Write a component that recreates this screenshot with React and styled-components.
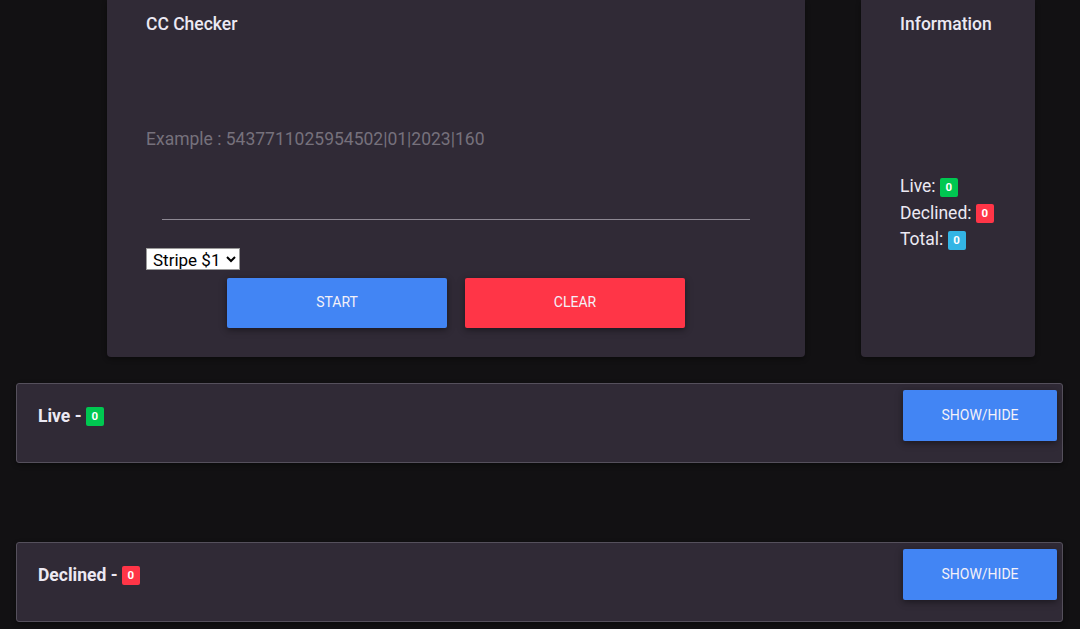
import React from 'react';
import styled, { createGlobalStyle } from 'styled-components';

const GlobalStyle = createGlobalStyle`
  html, body {
    margin: 0;
    padding: 0;
    background: #121113;
    font-family: Roboto, "Noto Sans", Arial, sans-serif;
  }
`;

const colors = {
  success: '#00c851',
  danger: '#ff3547',
  info: '#33b5e5',
};

function App() {
  return (
    <>
      <GlobalStyle />
      <PageStyled>
        <TopRowStyled>
          <CheckerCardStyled>
            <CardTitle>CC Checker</CardTitle>
            <FieldStyled>
              <FloatLabel>Example : 5437711025954502|01|2023|160</FloatLabel>
              <TextArea />
            </FieldStyled>
            <GateSelect defaultValue="stripe1">
              <option value="stripe1">Stripe $1</option>
            </GateSelect>
            <ButtonRow>
              <ActionButton color="#4285f4">Start</ActionButton>
              <ActionButton color={colors.danger}>Clear</ActionButton>
            </ButtonRow>
          </CheckerCardStyled>

          <InfoCardStyled>
            <CardTitle>Information</CardTitle>
            <StatList>
              <StatLine>Live: <Badge color={colors.success}>0</Badge></StatLine>
              <StatLine>Declined: <Badge color={colors.danger}>0</Badge></StatLine>
              <StatLine>Total: <Badge color={colors.info}>0</Badge></StatLine>
            </StatList>
          </InfoCardStyled>
        </TopRowStyled>

        <ResultPanel>
          <PanelHeader>
            <PanelTitle>Live - <Badge color={colors.success}>0</Badge></PanelTitle>
            <ActionButton color="#4285f4" small>Show/Hide</ActionButton>
          </PanelHeader>
        </ResultPanel>

        <ResultPanel spaced>
          <PanelHeader>
            <PanelTitle>Declined - <Badge color={colors.danger}>0</Badge></PanelTitle>
            <ActionButton color="#4285f4" small>Show/Hide</ActionButton>
          </PanelHeader>
        </ResultPanel>
      </PageStyled>
    </>
  );
}

export default App;

const PageStyled = styled.div`
  width: 1080px;
  padding-bottom: 20px;
`;

const TopRowStyled = styled.div`
  display: flex;
  gap: 56px;
  padding-left: 107px;
`;

const Card = styled.div`
  background: #302a36;
  border-radius: 0 0 4px 4px;
  box-shadow: 0 2px 5px rgba(0, 0, 0, 0.4);
  box-sizing: border-box;
  height: 357px;
  padding: 13px 39px 0;
  color: #ece9f3;
`;

const CheckerCardStyled = styled(Card)`
  width: 698px;
`;

const InfoCardStyled = styled(Card)`
  width: 174px;
`;

const CardTitle = styled.div`
  font-size: 17.5px;
  font-weight: 500;
  line-height: 22px;
  color: #ece9f3;
`;

const FieldStyled = styled.div`
  position: relative;
  margin: 93px 0 0 16px;
  width: 588px;
`;

const FloatLabel = styled.label`
  position: absolute;
  left: -16px;
  top: 0;
  font-size: 17.5px;
  line-height: 22px;
  color: #76717c;
  pointer-events: none;
`;

const TextArea = styled.textarea`
  display: block;
  width: 100%;
  height: 92px;
  box-sizing: border-box;
  background: transparent;
  border: none;
  border-bottom: 1px solid #8d8893;
  resize: none;
  outline: none;
  color: #ece9f3;
  font-family: inherit;
  font-size: 17px;
`;

const GateSelect = styled.select`
  display: block;
  margin-top: 28px;
  height: 22px;
  padding: 0 2px;
  background: #fff;
  color: #000;
  border: 1px solid #9a9a9a;
  border-radius: 0;
  font-family: Roboto, Arial, sans-serif;
  font-size: 17px;
`;

const ButtonRow = styled.div`
  display: flex;
  justify-content: center;
  gap: 18px;
  margin: 8px 0 0 -39px;
  width: 698px;
`;

const ActionButton = styled.button`
  width: ${p => (p.small ? '154px' : '220px')};
  height: ${p => (p.small ? '51px' : '50px')};
  padding: 0 0 2px;
  background: ${p => p.color};
  color: #f4f1f8;
  border: none;
  border-radius: 2px;
  box-shadow: 0 2px 5px rgba(0, 0, 0, 0.25), 0 2px 10px rgba(0, 0, 0, 0.2);
  font-family: Roboto, Arial, sans-serif;
  font-size: 14px;
  text-transform: uppercase;
  cursor: pointer;
`;

const StatList = styled.div`
  margin-top: 138px;
`;

const StatLine = styled.div`
  font-size: 17.5px;
  line-height: 26.5px;
  height: 26.5px;
  color: #ece9f3;
`;

const Badge = styled.span`
  display: inline-block;
  min-width: 18px;
  height: 19px;
  box-sizing: border-box;
  padding: 0 5px;
  background: ${p => p.color};
  color: #fff;
  border-radius: 2px;
  font-size: 11.5px;
  font-weight: 700;
  line-height: 19px;
  text-align: center;
  vertical-align: middle;
`;

const ResultPanel = styled.div`
  margin: ${p => (p.spaced ? '79px' : '26px')} 0 0 16px;
  width: 1047px;
  height: 80px;
  box-sizing: border-box;
  background: #302a36;
  border: 1px solid #55505c;
  border-radius: 3px;
  box-shadow: 0 2px 5px rgba(0, 0, 0, 0.4);
  padding: 6px 5px 0 21px;
`;

const PanelHeader = styled.div`
  display: flex;
  justify-content: space-between;
  align-items: center;
`;

const PanelTitle = styled.div`
  font-size: 17.5px;
  font-weight: 700;
  line-height: 22px;
  color: #ece9f3;
`;
